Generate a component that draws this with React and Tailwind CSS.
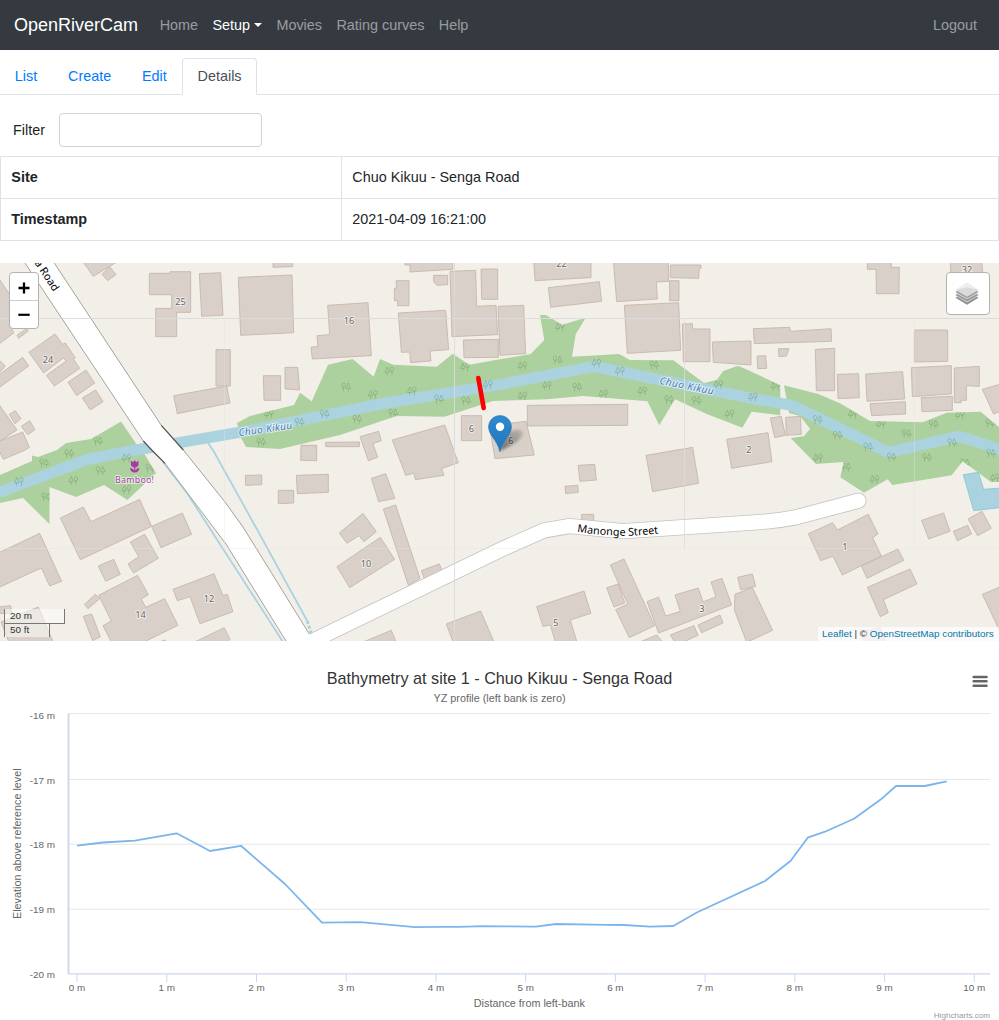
import React from "react";

// Building outlines, grouped by survey sheet. Each sheet has its own origin
// and stores coordinates in thirds of a pixel.
const SHEETS = [
  {
    x: 0,
    y: 260,
    shapes: [
      "-9,45 0,60 30,105 30,200 42,218 0,250 -9,256",
      "51,226 80,206 85,213 56,235",
      "87,277 165,222 187,253 196,249 226,294 220,297 239,325 163,378 139,346 199,303 190,294 131,339",
      "-9,294 0,302 16,318 0,336 -9,340",
      "-9,349 68,292 86,318 -9,388",
      "204,367 258,330 284,369 230,407",
      "247,414 287,390 309,425 271,450",
      "28,463 46,452 63,476 45,491",
      "64,499 89,482 105,509 83,524",
      "-9,425 0,438 51,510 5,540 -9,545",
      "-9,546 5,541 68,516 88,562 72,572 10,598 -9,560",
      "245,0 280,49 360,0",
      "306,43 329,20 348,44 323,62",
      "448,40 510,40 510,35 572,35 572,157 530,157 530,230 467,230 467,145 515,145 515,104 448,104",
      "598,41 662,38 669,166 605,169",
      "648,269 691,269 691,378 648,378",
      "521,407 680,378 690,429 532,461",
      "715,52 876,45 881,218 722,226",
    ],
  },
  {
    x: 250,
    y: 260,
    shapes: [
      "69,0 128,0 128,20 69,22",
      "233,136 354,128 364,287 187,297 183,261 204,260 201,227 239,224",
      "439,62 477,62 477,137 443,137 443,122 433,122 433,85 439,85",
      "445,159 587,151 596,269 540,273 543,303 482,308 479,276 454,277",
      "465,0 608,0 608,28 480,36 480,15 465,15",
      "551,46 593,46 593,74 561,76 551,65",
      "600,34 677,31 680,139 738,136 743,224 606,230",
      "693,27 743,27 743,118 695,118",
      "744,139 821,136 827,281 750,286",
      "640,240 745,238 745,292 642,293",
      "40,347 92,347 92,421 42,421",
      "105,322 143,322 149,390 105,387",
      "634,467 695,467 695,542 634,542",
      "153,556 200,556 200,602 152,601",
      "227,547 328,546 328,560 227,560",
      "330,530 386,514 394,542 369,551 383,592 355,602",
      "427,540 584,495 625,608 575,626 582,646 496,659 492,640 467,646",
    ],
  },
  {
    x: 500,
    y: 260,
    shapes: [
      "101,0 273,0 273,53 105,62",
      "145,83 298,65 305,124 152,142",
      "340,0 505,0 506,64 469,66 472,117 350,125",
      "511,15 603,15 603,25 598,25 596,55 511,53",
      "509,62 537,62 537,122 509,122",
      "373,136 536,128 542,271 382,280",
      "547,192 577,191 578,207 630,207 630,305 550,305",
      "637,246 753,243 753,315 640,307",
      "82,436 383,433 383,496 82,498",
      "-32,498 30,490 78,484 103,585 -15,596",
      "438,586 578,562 596,670 458,695",
      "680,538 804,518 816,605 695,625",
    ],
  },
  {
    x: 750,
    y: 260,
    shapes: [
      "352,0 424,0 424,22 448,22 447,101 379,101 378,28 352,28",
      "600,0 695,0 700,60 604,60",
      "10,206 119,202 122,214 243,206 245,244 13,251",
      "85,266 117,266 109,288 87,290",
      "21,288 47,287 50,325 23,326",
      "196,268 254,265 254,392 199,392",
      "262,343 326,341 328,413 264,416",
      "347,342 458,335 464,417 351,424",
      "360,431 466,425 467,462 365,467",
      "493,210 593,210 593,304 493,306",
      "484,323 604,317 604,402 487,410",
      "514,413 607,409 607,451 516,455",
      "613,324 688,319 688,379 649,377 649,421 633,421 633,428 613,428",
      "697,388 760,370 760,450 731,462",
      "61,474 94,469 106,526 74,533",
      "107,472 151,469 154,523 109,526",
    ],
  },
  {
    x: 0,
    y: 450,
    shapes: [
      "181,204 250,171 273,215 419,148 455,229 241,329",
      "455,229 547,189 575,253 483,293",
      "391,276 434,253 475,325 401,369 384,342 416,320",
      "295,348 341,328 361,373 317,394",
      "-9,311 119,250 185,394 149,408 124,354 -9,415",
      "296,436 413,376 445,434 424,447 437,472 494,446 534,526 420,582 337,582 309,527 334,513",
      "519,418 642,371 669,437 682,433 699,485 600,521 570,440 532,452",
      "253,463 286,433 299,446 264,476",
      "250,499 275,492 301,560 278,572",
      "-9,471 32,467 36,490 -9,490",
      "3,516 115,471 163,585 30,585",
      "580,578 673,533 690,568 670,590",
      "465,580 495,570 500,590",
      "736,76 785,75 785,104 737,106",
    ],
  },
  {
    x: 250,
    y: 450,
    shapes: [
      "139,76 235,73 235,127 142,131",
      "85,121 131,121 131,159 85,161",
      "364,85 407,71 435,145 386,155",
      "400,177 437,165 510,385 475,406",
      "268,249 339,190 379,245 342,275 327,257 291,280",
      "261,350 391,262 434,328 299,413",
      "514,362 568,342 576,362 523,386",
      "589,522 692,483 735,583 612,583",
      "325,582 424,541 442,585",
    ],
  },
  {
    x: 500,
    y: 450,
    shapes: [
      "234,46 284,43 289,90 240,94",
      "195,109 233,106 235,127 197,131",
      "245,193 281,193 281,225 245,225",
      "110,470 252,423 273,490 211,510 235,590 170,590 151,525 129,529",
      "331,345 372,327 464,527 388,563 347,479 383,462",
      "320,413 355,402 374,459 342,471",
      "441,455 476,441 497,498 541,484 525,435 595,414 609,456 648,440 633,396 666,385 695,465 476,549",
      "594,525 660,495 669,519 605,548",
      "511,555 582,527 594,556 530,585",
      "410,580 470,555 500,590",
      "713,382 757,372 767,409 722,419",
      "705,433 757,412 818,541 740,577 703,480",
    ],
  },
  {
    x: 750,
    y: 450,
    shapes: [
      "175,251 248,218 262,240 355,193 384,252 368,263 394,318 277,375 249,319 212,332",
      "334,348 444,297 461,331 351,385",
      "352,412 480,357 501,402 400,449 415,488 391,500",
      "515,211 581,189 600,244 536,267",
      "610,244 653,226 665,252 622,272",
      "654,207 696,184 724,235 683,257",
      "697,433 755,409 755,555",
      "330,547 390,533 405,573 345,585",
    ],
  },
];

const WOODS = [
  "0,475 32,461 32,455.5 38,457 57,450 66,443 91,439 121,421.5 137,445 145,455 156,473 127.5,500 104,485 76,497 49.5,487 49.5,524 23,498 0,503",
  "237,423 250,416 294,405 300,392.7 311.7,401.3 328,364.7 352.7,359 373.7,376.7 380,359 393.3,364.7 436.7,366.7 452.7,353.7 469.3,364.7 500,359.3 530.7,354 544.3,340 540,315 545.7,315 562.3,324.7 585.7,317.7 575.7,334.3 572,356.7 619,354 630,360 673.3,360.3 704,383 716.7,380 723.3,371 738,365.7 750,371 780.3,385.3 780.3,415.3 751.7,411.7 742.3,427.7 706.7,414 675,399.3 659.3,425.3 647.3,401.3 583.3,396 546.7,399.3 493,401 444.3,416.7 396.7,416 340,435 280,449 246,447 241,438",
  "784,385.3 818.3,394 840,403.3 870,421 922.7,422.3 946.7,412.7 980.7,411.7 1000,428 1000,482 991,482 962.7,461.3 951.7,475.3 892.3,485 887.7,479.3 864,492.7 840.3,477.3 843.7,462 816,464 802.3,450 790.7,438 804,436.3 810,428.7 800,416 789,413",
];

// x, y, kind: 0 = conifer on the left, 1 = conifer on the right
const TREES = [
  [98, 441, 1], [269, 414, 0], [261, 442, 1], [299.5, 422, 1], [324.5, 414, 1],
  [357, 419, 1], [346, 387, 1], [373, 394.5, 0], [389.5, 371, 0], [412, 391, 0],
  [393, 413, 1], [439, 399, 1], [466, 400.5, 1], [465, 367, 0], [488, 384.5, 0],
  [560, 327, 0], [557.5, 360, 1], [522.5, 366, 0], [547, 385.5, 0], [522.5, 396, 0],
  [577, 387, 1], [596.5, 363, 0], [620, 371, 0], [603.5, 394, 0], [642.5, 391, 0],
  [654, 365, 1], [669, 399.5, 1], [696.5, 400.5, 1], [718.5, 384.5, 0], [729.5, 414, 0],
  [753, 397, 0], [775.5, 386, 0], [817.5, 419.5, 1], [837.5, 435, 1], [853, 414, 0],
  [881, 424, 0], [868, 447, 1], [906.5, 433.5, 1], [933.5, 424, 1], [960, 415, 0],
  [990, 423, 1], [952, 442.5, 1], [991, 453, 1], [44, 463, 1], [69, 453.5, 1],
  [19, 481.5, 0], [46, 497, 1], [73.5, 480.5, 0], [100.5, 470.5, 1], [126.5, 458, 0],
  [126.5, 489.5, 0], [150, 468, 1], [818, 458, 0], [846, 467, 1], [874.5, 479.5, 0],
  [891.5, 457, 1], [927, 457.5, 1], [965, 463, 1], [995, 478, 0],
];

const HOUSE_NUMBERS = [
  ["25", 180.5, 301.7], ["16", 349, 320.5], ["24", 48, 360], ["22", 561.5, 263.5],
  ["32", 967, 270], ["6", 471.3, 428.5], ["6", 511, 441], ["2", 749, 450],
  ["14", 140.5, 614.5], ["12", 209, 599], ["10", 366, 563.5], ["5", 556, 622.5],
  ["3", 702, 608.5], ["1", 845, 546.5],
];

const RIVER =
  "M-5,494 L87,459.5 L133,450.5 L180,442.5 L250,430.5 L383,403.5 L500,384.5 L594,366.5 L750,398 L790,405 L800,409 L888,452.3 L959,436.3 L1005,451";
const STREET =
  "M290,652 L309,642.6 L500,550 L544,530.5 L569.5,526 L623,531.2 L750,522.8 Q775,521.5 796,517.3 L858.5,500.7";

function Tree({ x, y, kind }) {
  return (
    <g transform={`translate(${x} ${y}) scale(${kind ? -1 : 1} 1)`}>
      <path d="M-2.2,-4 L-4.6,1.4 H-0.2 Z M-2.4,1.4 V4.4" />
      <path d="M2.4,-4 C0.3,-4 -0.1,0.6 2.4,0.6 C4.9,0.6 4.5,-4 2.4,-4 Z M2.4,-0.5 V4.4" />
    </g>
  );
}

function MapDrawing() {
  return (
    <svg className="block h-[378px] w-[999px]" viewBox="0 263 999 378">
      <defs>
        <path id="street-name" d="M577,531.8 Q600,535.4 624,535.8 Q642,535.6 665,532.8" />
        <linearGradient id="pin" x1="0" y1="0" x2="0" y2="1">
          <stop offset="0" stopColor="#2e8ad2" />
          <stop offset="1" stopColor="#2075b8" />
        </linearGradient>
        <linearGradient id="shade" gradientUnits="userSpaceOnUse" x1="500" y1="451" x2="522" y2="430">
          <stop offset="0" stopColor="#000" stopOpacity="0.5" />
          <stop offset="1" stopColor="#000" stopOpacity="0.12" />
        </linearGradient>
        <filter id="soft" x="-50%" y="-50%" width="200%" height="200%">
          <feGaussianBlur stdDeviation="1.8" />
        </filter>
        <clipPath id="woods">
          {WOODS.map((p) => (
            <polygon key={p} points={p} />
          ))}
        </clipPath>
      </defs>
      <rect x="0" y="263" width="999" height="378" fill="#f2efe9" />
      <g fill="#add19e">
        {WOODS.map((p) => (
          <polygon key={p} points={p} />
        ))}
      </g>
      <g fill="none" stroke="#aad3df">
        <path d={RIVER} strokeWidth="11" strokeLinejoin="round" />
        <path d="M208,443 L213.5,451 L250,516.7 L307.3,621" strokeWidth="1.8" />
        <path d="M163,462 L187,493 L250,590.7 L283,642" strokeWidth="1.8" />
      </g>
      <g fill="none" stroke="#5c8a55" strokeOpacity="0.38" strokeWidth="0.9" clipPath="url(#woods)">
        {TREES.map(([x, y, k]) => (
          <Tree key={`${x}-${y}`} x={x} y={y} kind={k} />
        ))}
      </g>
      <polygon
        points="963.3,474.7 978.3,472.3 983.7,489.3 1001,488 1001,507.5 973.7,510.7"
        fill="#aad3df"
        stroke="#7fc4da"
        strokeWidth="0.8"
      />
      {SHEETS.map((s) => (
        <g
          key={`${s.x}-${s.y}`}
          transform={`translate(${s.x} ${s.y}) scale(0.33333)`}
          fill="#d9d0c9"
          stroke="#c6b5a9"
          strokeWidth="2.6"
        >
          {s.shapes.map((p) => (
            <polygon key={p} points={p} />
          ))}
        </g>
      ))}
      <path d={STREET} fill="none" stroke="#c4c3c0" strokeWidth="16" strokeLinecap="round" />
      <polygon
        points="25,263 143.3,441 151.7,450 165,463.3 226.7,545 250,583 286,641 313,641 309.3,634 250,538.3 225,502 183.3,450 161.3,425.3 54.3,263"
        fill="#fff"
      />
      <g fill="none" stroke="#a5a29d" strokeWidth="1">
        <path d="M25,263 L143.3,441 L151.7,450 L165,463.3 L226.7,545 L250,583 L286,641" />
        <path d="M54.3,263 L161.3,425.3 L183.3,450 L225,502 L243,527 L309.3,634" />
      </g>
      <g fill="none" stroke="#555" strokeWidth="1.2">
        <path d="M143.3,441 L151.7,450 L165,463.3" />
        <path d="M161.3,425.3 L183.3,450" />
      </g>
      <path d={STREET} fill="none" stroke="#fff" strokeWidth="14.4" strokeLinecap="round" />
      <path d="M307.3,621 L311.5,634" fill="none" stroke="#aad3df" strokeWidth="3" strokeDasharray="3 2" />

      <g fill="none" strokeWidth="1">
        <path d="M0,318.5 H999 M454.5,263 V641" stroke="#dadade" strokeOpacity="0.9" />
        <path d="M684.5,318 V548" stroke="#dddcdd" strokeOpacity="0.8" />
        <path d="M224.5,318 V548 M914.5,318 V548 M0,548.5 H999" stroke="#e6e4e1" strokeOpacity="0.4" />
      </g>

      <g
        fontFamily='"Noto Sans", sans-serif'
        textAnchor="middle"
        stroke="#fff"
        strokeOpacity="0.6"
        strokeLinejoin="round"
        style={{ paintOrder: "stroke" }}
      >
        <g fontSize="9.2" fill="#666" strokeWidth="2">
          {HOUSE_NUMBERS.map(([t, x, y]) => (
            <text key={`${t}-${x}`} x={x} y={y + 3.3}>
              {t}
            </text>
          ))}
        </g>
        <g fontSize="10.2" fontStyle="italic" fill="#4d80b3" strokeWidth="2">
          <text transform="translate(265.8 432.5) rotate(-8)" textLength="54">Chuo Kikuu</text>
          <text transform="translate(686 389.3) rotate(11.5)" textLength="55">Chuo Kikuu</text>
        </g>
        <g fill="#000" strokeWidth="2">
          <text transform="translate(53.5 292) rotate(56.5)" fontSize="10.8" textAnchor="end">
            Senga Road
          </text>
          <text fontSize="10.8" textAnchor="start">
            <textPath href="#street-name" textLength="82">Manonge Street</textPath>
          </text>
        </g>
        <text x="134.5" y="483.3" fontSize="9" fill="#a546a5" strokeWidth="2" textLength="39">
          Bamboo!
        </text>
      </g>
      <g fill="#ab38ab">
        <path d="M130.9,460.4 L133,462.2 L134.7,460.2 L136.4,462.2 L138.5,460.4 V464.6 Q138.2,467.4 134.7,467.4 Q131.2,467.4 130.9,464.6 Z" />
        <path d="M134.1,467 H135.3 V470.6 Q136.4,468.4 139.4,467.8 Q139,472.5 134.7,472.5 Q130.4,472.5 130,467.8 Q133,468.4 134.1,470.6 Z" />
      </g>

      <path d="M478.3,378 L483.7,408" stroke="#f00" strokeWidth="4.6" strokeLinecap="round" />

      <path
        d="M500,451 Q502,438 510,432 Q519,427 523,432 Q524,440 500,451 Z"
        fill="url(#shade)"
        filter="url(#soft)"
      />
      <path
        d="M500,451.5 C498.4,445.5 495.8,441.5 493,437.5 C490.5,433.8 488.7,431 488.7,427 C488.7,420.5 493.5,415.7 500,415.7 C506.5,415.7 511.3,420.5 511.3,427 C511.3,431 509.5,433.8 507,437.5 C504.2,441.5 501.6,445.5 500,451.5 Z"
        fill="url(#pin)"
        stroke="#2c77b4"
        strokeWidth="0.8"
      />
      <circle cx="500" cy="426.8" r="4.2" fill="#fff" />
    </svg>
  );
}

function LayersIcon() {
  return (
    <svg className="mr-[2px] h-[24px] w-[24px]" viewBox="0 0 24 24">
      <polygon points="0.5,15.8 12,9.5 23.5,15.8 12,22.8" fill="#8f8f8f" />
      <polygon points="0.5,13.8 12,7.3 23.5,13.8 12,20.4" fill="#d8d8d8" />
      <polygon points="0.5,13 12,6.5 23.5,13 12,19.6" fill="#999" />
      <polygon points="0.5,11 12,3.8 23.5,11 12,17.2" fill="#e2e2e2" />
      <polygon points="0.5,10 12,2.5 23.5,10 12,16.4" fill="#a0a0a0" />
      <polygon points="0.5,8 12,0.8 23.5,8 12,14.8" fill="#dadada" />
      <polygon points="0.5,8 12,0.8 23.5,8 12,5.2" fill="#efefef" />
    </svg>
  );
}

function SiteMap() {
  return (
    <section className="relative mt-[22px] h-[378px] w-full overflow-hidden">
      <MapDrawing />
      <div className="absolute left-[9px] top-[9px] flex w-[30px] flex-col rounded-[4px] border border-[#b5b2ae] bg-white text-black">
        <button className="flex h-[28px] items-center justify-center border-b border-[#ccc] pt-[2px]" aria-label="Zoom in">
          <svg className="h-[12px] w-[12px]" viewBox="0 0 12 12">
            <path d="M0.5,6 H11.5 M6,0.5 V11.5" stroke="#000" strokeWidth="2.3" />
          </svg>
        </button>
        <button className="flex h-[27px] items-center justify-center" aria-label="Zoom out">
          <svg className="h-[12px] w-[12px]" viewBox="0 0 12 12">
            <path d="M0.3,5.8 H11.7" stroke="#000" strokeWidth="2.2" />
          </svg>
        </button>
      </div>
      <div className="absolute right-[9px] top-[9px] flex h-[43px] w-[44px] items-center justify-center rounded-[4px] border border-[#b5b2ae] bg-white">
        <LayersIcon />
      </div>
      <div className="absolute bottom-[4px] left-[4px] flex flex-col items-start text-[9.9px] leading-[11px] text-[#333]">
        <div className="h-[15px] w-[61px] border border-t-0 border-[#777] bg-white/50 pl-[5px] pt-px">20 m</div>
        <div className="-mt-px h-[14px] w-[46px] border border-b-0 border-[#777] bg-white/50 pl-[5px]">50 ft</div>
      </div>
      <div className="absolute bottom-0 right-0 h-[14px] w-[181px] whitespace-nowrap bg-white/70 pl-[4px] text-[9.9px] leading-[14px] text-[#333]">
        <a className="text-[#0078a8]">Leaflet</a> | © <a className="text-[#0078a8]">OpenStreetMap contributors</a>
      </div>
    </section>
  );
}

const PROFILE = [
  [77, 845.7], [103, 842.5], [135, 840.6], [176.6, 833.3], [210, 851], [241, 845.8],
  [285, 884], [322, 922.7], [360, 922.2], [415, 927.2], [440, 926.8], [458, 926.8],
  [484, 926.2], [500, 926.3], [536, 926.7], [556, 924], [606.7, 924.8], [624, 925],
  [650, 926.7], [673.3, 926], [697.3, 912.3], [765, 881], [790.7, 860.7], [807.7, 837.7],
  [825, 831.7], [854, 818.7], [881, 799.3], [896, 786], [924.7, 786], [946.7, 781.3],
];
const TICKS = [0, 1, 2, 3, 4, 5, 6, 7, 8, 9, 10];
// label, grid line y, label baseline y
const LEVELS = [
  ["-16 m", 713.6, 719], ["-17 m", 779.4, 784], ["-18 m", 844.3, 848],
  ["-19 m", 909.2, 913], ["-20 m", 974, 978],
];

function ProfileChart() {
  return (
    <svg
      className="block h-[379px] w-[999px]"
      viewBox="0 641 999 379"
      fontFamily='"Liberation Sans", Arial, sans-serif'
      fill="#666"
    >
      <g stroke="#e6e6e6" strokeWidth="1">
        {LEVELS.slice(0, 4).map(([t, y]) => (
          <path key={t} d={`M68,${y} H990`} />
        ))}
      </g>
      <g stroke="#ccd6eb" fill="none">
        <path d="M68.5,713.5 V974" strokeWidth="1.8" />
        <path d="M68,973.8 H990" strokeWidth="1.2" />
        {TICKS.map((n) => (
          <path key={n} d={`M${77 + n * 89.73},974 V982`} strokeWidth="1" />
        ))}
      </g>
      <polyline
        points={PROFILE.map((p) => p.join(",")).join(" ")}
        fill="none"
        stroke="#7cb5ec"
        strokeWidth="1.8"
        strokeLinejoin="round"
      />
      <text x="499.5" y="684" fontSize="16.2" fill="#333" textAnchor="middle">
        Bathymetry at site 1 - Chuo Kikuu - Senga Road
      </text>
      <text x="499.5" y="702" fontSize="10.8" textAnchor="middle">
        YZ profile (left bank is zero)
      </text>
      <g fontSize="9.9" textAnchor="end">
        {LEVELS.map(([t, , y]) => (
          <text key={t} x="55" y={y}>
            {t}
          </text>
        ))}
      </g>
      <g fontSize="9.9" textAnchor="middle">
        {TICKS.map((n) => (
          <text key={n} x={77 + n * 89.73} y="991">
            {n} m
          </text>
        ))}
      </g>
      <text x="529.3" y="1007" fontSize="10.8" textAnchor="middle">
        Distance from left-bank
      </text>
      <text transform="translate(21 843.7) rotate(-90)" fontSize="10.8" textAnchor="middle">
        Elevation above reference level
      </text>
      <text x="990" y="1018" fontSize="8.1" fill="#999" textAnchor="end">
        Highcharts.com
      </text>
      <path
        d="M973.7,677 H986.5 M973.7,681.3 H986.5 M973.7,685.7 H986.5"
        stroke="#666"
        strokeWidth="2.6"
        strokeLinecap="round"
      />
    </svg>
  );
}

function NavBar() {
  return (
    <nav className="flex h-[50px] items-center bg-[#343a40] pl-[14px] pr-[22px] text-white/50">
      <a className="mr-[21.6px] text-[18px] leading-[27px] text-white">OpenRiverCam</a>
      <div className="flex flex-1 items-center gap-[14.4px] pt-[2px]">
        <a>Home</a>
        <a className="flex items-center text-white">
          Setup
          <span className="ml-[4px] mt-[-3px] border-x-[4.3px] border-t-[4.3px] border-x-transparent border-t-white" />
        </a>
        <a>Movies</a>
        <a>Rating curves</a>
        <a>Help</a>
      </div>
      <a className="pt-[2px]">Logout</a>
    </nav>
  );
}

function Tabs() {
  const tab = "h-[37px] border px-[14.4px]";
  return (
    <div className="-ml-[0.6px] flex h-[45px] items-end border-b border-[#dee2e6] text-[#007bff]">
      <a className={`${tab} border-transparent pt-[8px]`}>List</a>
      <a className={`${tab} border-transparent pt-[8px]`}>Create</a>
      <a className={`${tab} border-transparent pt-[8px]`}>Edit</a>
      <a className={`${tab} -mb-px rounded-t-[4px] border-[#dee2e6] border-b-white bg-white pt-[7px] text-[#495057]`}>
        Details
      </a>
    </div>
  );
}

function DetailTable() {
  const rows = [
    ["Site", "Chuo Kikuu - Senga Road"],
    ["Timestamp", "2021-04-09 16:21:00"],
  ];
  return (
    <div className="mt-[9px] border-x border-t border-[#dee2e6]">
      {rows.map(([name, value]) => (
        <div key={name} className="flex h-[42px] items-center border-b border-[#dee2e6]">
          <div className="flex h-full w-[341px] items-center border-r border-[#dee2e6] pl-[10.3px] font-bold">
            {name}
          </div>
          <div className="pl-[10.3px]">{value}</div>
        </div>
      ))}
    </div>
  );
}

export default function App() {
  return (
    <div className="h-[1020px] w-[999px] overflow-hidden bg-white font-['Liberation_Sans',Arial,sans-serif] text-[14.4px] leading-[21.6px] text-[#212529]">
      <NavBar />
      <Tabs />
      <div className="mt-[18px] flex h-[34px] items-center pl-[13px]">
        <label className="w-[46px] pt-[2px]">Filter</label>
        <input className="h-[34px] w-[203px] rounded-[4px] border border-[#ced4da] bg-white px-2" />
      </div>
      <DetailTable />
      <SiteMap />
      <ProfileChart />
    </div>
  );
}
